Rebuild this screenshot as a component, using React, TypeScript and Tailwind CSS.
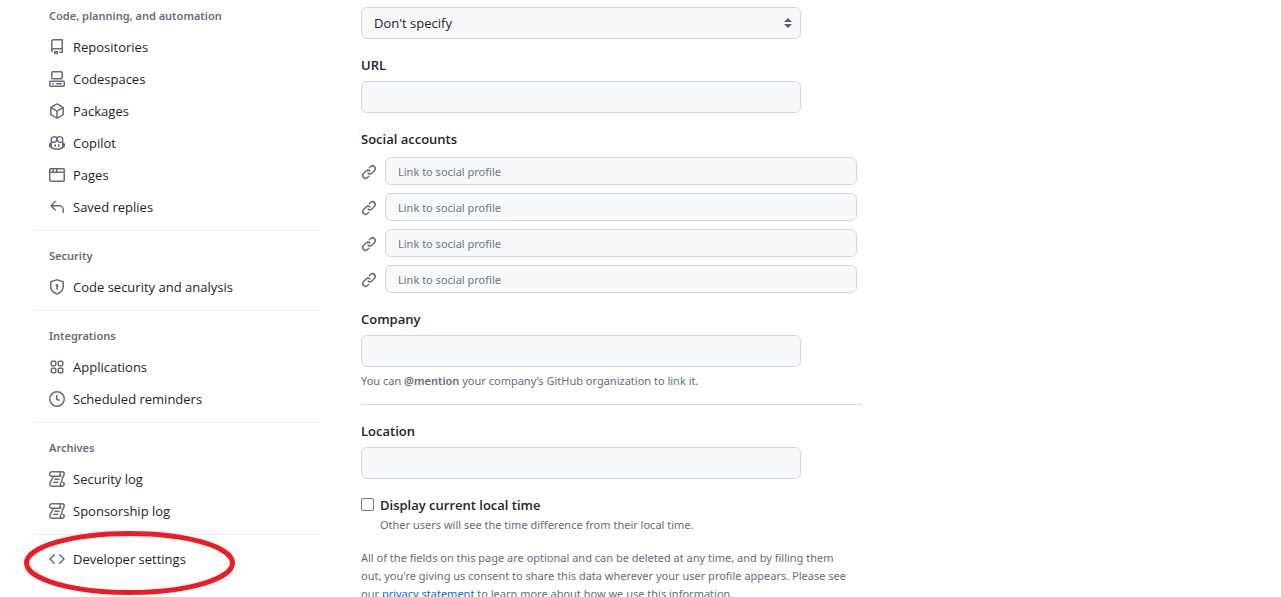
import { useId } from "react";

const ICONS = {
  repo: "M2 2.5A2.5 2.5 0 0 1 4.5 0h8.75a.75.75 0 0 1 .75.75v12.5a.75.75 0 0 1-.75.75h-2.5a.75.75 0 0 1 0-1.5h1.75v-2h-8a1 1 0 0 0-.714 1.7.75.75 0 1 1-1.072 1.05A2.495 2.495 0 0 1 2 11.5Zm10.5-1h-8a1 1 0 0 0-1 1v6.708A2.486 2.486 0 0 1 4.5 9h8ZM5 12.25a.25.25 0 0 1 .25-.25h3.5a.25.25 0 0 1 .25.25v3.25a.25.25 0 0 1-.4.2l-1.45-1.087a.249.249 0 0 0-.3 0L5.4 15.7a.25.25 0 0 1-.4-.2Z",
  codespaces:
    "M0 11.25c0-.966.784-1.75 1.75-1.75h12.5c.966 0 1.75.784 1.75 1.75v3A1.75 1.75 0 0 1 14.25 16H1.75A1.75 1.75 0 0 1 0 14.25Zm2-9.5C2 .784 2.784 0 3.75 0h8.5C13.216 0 14 .784 14 1.75v5a1.75 1.75 0 0 1-1.75 1.75h-8.5A1.75 1.75 0 0 1 2 6.75Zm1.75-.25a.25.25 0 0 0-.25.25v5c0 .138.112.25.25.25h8.5a.25.25 0 0 0 .25-.25v-5a.25.25 0 0 0-.25-.25Zm-2 9.5a.25.25 0 0 0-.25.25v3c0 .138.112.25.25.25h12.5a.25.25 0 0 0 .25-.25v-3a.25.25 0 0 0-.25-.25Z M7 12.75a.75.75 0 0 1 .75-.75h4.5a.75.75 0 0 1 0 1.5h-4.5a.75.75 0 0 1-.75-.75Zm-4 0a.75.75 0 0 1 .75-.75h.5a.75.75 0 0 1 0 1.5h-.5a.75.75 0 0 1-.75-.75Z",
  package:
    "m8.878.392 5.25 3.045c.54.314.872.89.872 1.514v6.098a1.75 1.75 0 0 1-.872 1.514l-5.25 3.045a1.75 1.75 0 0 1-1.756 0l-5.25-3.045A1.75 1.75 0 0 1 1 11.049V4.951c0-.624.332-1.201.872-1.514L7.122.392a1.75 1.75 0 0 1 1.756 0ZM7.875 1.69l-4.63 2.685L8 7.133l4.755-2.758-4.63-2.685a.248.248 0 0 0-.25 0ZM2.5 5.677v5.372c0 .09.047.171.125.216l4.625 2.683V8.432Zm6.25 8.271 4.625-2.683a.25.25 0 0 0 .125-.216V5.677L8.75 8.432Z",
  copilot:
    "M7.998 15.035c-4.562 0-7.873-2.914-7.998-3.749V9.338c.085-.628.677-1.686 1.588-2.065.013-.07.024-.143.036-.218.029-.183.06-.384.126-.612-.201-.508-.254-1.084-.254-1.656 0-.87.128-1.769.693-2.484.579-.733 1.494-1.124 2.724-1.261 1.206-.134 2.262.034 2.944.765.05.053.096.108.139.165.044-.057.094-.112.143-.165.682-.731 1.738-.899 2.944-.765 1.23.137 2.145.528 2.724 1.261.566.715.693 1.614.693 2.484 0 .572-.053 1.148-.254 1.656.066.228.098.429.126.612.012.076.024.148.037.218.924.385 1.522 1.471 1.591 2.095v1.872c0 .766-3.351 3.795-8.002 3.795Zm0-1.485c2.28 0 4.584-1.11 5.002-1.433V7.862l-.023-.116c-.49.21-1.075.291-1.727.291-1.146 0-2.059-.327-2.71-.991A3.222 3.222 0 0 1 8 6.303a3.24 3.24 0 0 1-.544.743c-.65.664-1.563.991-2.71.991-.652 0-1.236-.081-1.727-.291l-.023.116v4.255c.419.323 2.722 1.433 5.002 1.433ZM6.762 2.83c-.193-.206-.637-.413-1.682-.297-1.019.113-1.479.404-1.713.7-.247.312-.369.789-.369 1.554 0 .793.129 1.171.308 1.371.162.181.519.379 1.442.379.853 0 1.339-.235 1.638-.54.315-.322.527-.827.617-1.553.117-.935-.037-1.395-.241-1.614Zm4.155-.297c-1.044-.116-1.488.091-1.681.297-.204.219-.359.679-.242 1.614.091.726.303 1.231.618 1.553.299.305.784.54 1.638.54.922 0 1.28-.198 1.442-.379.179-.2.308-.578.308-1.371 0-.765-.123-1.242-.37-1.554-.233-.296-.693-.587-1.713-.7Z M6.25 9.037a.75.75 0 0 1 .75.75v1.501a.75.75 0 0 1-1.5 0V9.787a.75.75 0 0 1 .75-.75Zm4.25.75v1.501a.75.75 0 0 1-1.5 0V9.787a.75.75 0 0 1 1.5 0Z",
  browser:
    "M0 2.75C0 1.784.784 1 1.75 1h12.5c.966 0 1.75.784 1.75 1.75v10.5A1.75 1.75 0 0 1 14.25 15H1.75A1.75 1.75 0 0 1 0 13.25ZM14.5 6h-13v7.25c0 .138.112.25.25.25h12.5a.25.25 0 0 0 .25-.25Zm-6-3.5v2h6V2.75a.25.25 0 0 0-.25-.25ZM5 2.5v2h2v-2Zm-3.25 0a.25.25 0 0 0-.25.25V4.5h2v-2Z",
  reply:
    "M6.78 1.97a.75.75 0 0 1 0 1.06L3.81 6h6.44A4.75 4.75 0 0 1 15 10.75v2.5a.75.75 0 0 1-1.5 0v-2.5a3.25 3.25 0 0 0-3.25-3.25H3.81l2.97 2.97a.749.749 0 0 1-.326 1.275.749.749 0 0 1-.734-.215L1.47 7.28a.75.75 0 0 1 0-1.06l4.25-4.25a.75.75 0 0 1 1.06 0Z",
  shieldLock:
    "m8.533.133 5.25 1.68A1.75 1.75 0 0 1 15 3.48V7c0 1.566-.32 3.182-1.303 4.682-.983 1.498-2.585 2.813-5.032 3.855a1.697 1.697 0 0 1-1.33 0c-2.447-1.042-4.049-2.357-5.032-3.855C1.32 10.182 1 8.566 1 7V3.48a1.755 1.755 0 0 1 1.217-1.667l5.25-1.68a1.748 1.748 0 0 1 1.066 0Zm-.61 1.429.001.001-5.25 1.68a.251.251 0 0 0-.174.237V7c0 1.36.275 2.666 1.057 3.859.784 1.194 2.121 2.342 4.366 3.298a.196.196 0 0 0 .154 0c2.245-.957 3.582-2.103 4.366-3.297C13.225 9.666 13.5 8.358 13.5 7V3.48a.25.25 0 0 0-.174-.238l-5.25-1.68a.25.25 0 0 0-.153 0ZM9.5 6.5c0 .536-.286 1.032-.75 1.3v2.45a.75.75 0 0 1-1.5 0V7.8A1.5 1.5 0 1 1 9.5 6.5Z",
  apps: "M1.5 3.25c0-.966.784-1.75 1.75-1.75h2.5c.966 0 1.75.784 1.75 1.75v2.5A1.75 1.75 0 0 1 5.75 7.5h-2.5A1.75 1.75 0 0 1 1.5 5.75Zm7 0c0-.966.784-1.75 1.75-1.75h2.5c.966 0 1.75.784 1.75 1.75v2.5a1.75 1.75 0 0 1-1.75 1.75h-2.5A1.75 1.75 0 0 1 8.5 5.75Zm-7 7c0-.966.784-1.75 1.75-1.75h2.5c.966 0 1.75.784 1.75 1.75v2.5a1.75 1.75 0 0 1-1.75 1.75h-2.5a1.75 1.75 0 0 1-1.75-1.75Zm7 0c0-.966.784-1.75 1.75-1.75h2.5c.966 0 1.75.784 1.75 1.75v2.5a1.75 1.75 0 0 1-1.75 1.75h-2.5a1.75 1.75 0 0 1-1.75-1.75ZM3.25 3a.25.25 0 0 0-.25.25v2.5c0 .138.112.25.25.25h2.5A.25.25 0 0 0 6 5.75v-2.5A.25.25 0 0 0 5.75 3Zm7 0a.25.25 0 0 0-.25.25v2.5c0 .138.112.25.25.25h2.5a.25.25 0 0 0 .25-.25v-2.5a.25.25 0 0 0-.25-.25Zm-7 7a.25.25 0 0 0-.25.25v2.5c0 .138.112.25.25.25h2.5a.25.25 0 0 0 .25-.25v-2.5a.25.25 0 0 0-.25-.25Zm7 0a.25.25 0 0 0-.25.25v2.5c0 .138.112.25.25.25h2.5a.25.25 0 0 0 .25-.25v-2.5a.25.25 0 0 0-.25-.25Z",
  clock:
    "M8 0a8 8 0 1 1 0 16A8 8 0 0 1 8 0ZM1.5 8a6.5 6.5 0 1 0 13 0 6.5 6.5 0 0 0-13 0Zm7-3.25v2.992l2.028.812a.75.75 0 0 1-.557 1.392l-2.5-1A.751.751 0 0 1 7 8.25v-3.5a.75.75 0 0 1 1.5 0Z",
  code: "m11.28 3.22 4.25 4.25a.75.75 0 0 1 0 1.06l-4.25 4.25a.749.749 0 0 1-1.275-.326.749.749 0 0 1 .215-.734L13.94 8l-3.72-3.72a.749.749 0 0 1 .326-1.275.749.749 0 0 1 .734.215Zm-6.56 0a.751.751 0 0 1 1.042.018.751.751 0 0 1 .018 1.042L2.06 8l3.72 3.72a.749.749 0 0 1-.326 1.275.749.749 0 0 1-.734-.215L.47 8.53a.75.75 0 0 1 0-1.06Z",
  link: "m7.775 3.275 1.25-1.25a3.5 3.5 0 1 1 4.95 4.95l-2.5 2.5a3.5 3.5 0 0 1-4.95 0 .751.751 0 0 1 .018-1.042.751.751 0 0 1 1.042-.018 1.998 1.998 0 0 0 2.83 0l2.5-2.5a2.002 2.002 0 0 0-2.83-2.83l-1.25 1.25a.751.751 0 0 1-1.042-.018.751.751 0 0 1-.018-1.042Zm-4.69 9.64a1.998 1.998 0 0 0 2.83 0l1.25-1.25a.751.751 0 0 1 1.042.018.751.751 0 0 1 .018 1.042l-1.25 1.25a3.5 3.5 0 1 1-4.95-4.95l2.5-2.5a3.5 3.5 0 0 1 4.95 0 .751.751 0 0 1-.018 1.042.751.751 0 0 1-1.042.018 1.998 1.998 0 0 0-2.83 0l-2.5 2.5a1.998 1.998 0 0 0 0 2.83Z",
};

type IconName = keyof typeof ICONS | "log";

function Icon({ name }: { name: IconName }) {
  if (name === "log") {
    return (
      <svg
        viewBox="0 0 16 16"
        className="size-4 shrink-0 fill-none stroke-[#656d76] stroke-[1.5]"
        strokeLinecap="round"
        strokeLinejoin="round"
        aria-hidden="true"
      >
        <path d="M2.75.75h10.5a2 2 0 0 1 1.9 2.4c-.3 1.8-1.5 3.4-2 5-.4 1.1-.5 1.8-.5 2.6M11.6 5.25H2.75a2 2 0 0 1-2-2V2.75a2 2 0 0 1 2-2M12 .75c-1.3 1.1-1.4 3.2-.2 4.4M4.2 5.3C4 7.500 1.6 9.500.9 12.400a2.200 2.200 0 0 0 2 2.850h10.350a2 2 0 0 0 1-3.700M12.700 10.700c-1.300 1.200-1.600 3.200-.500 4.500M6 8.250h4M4.750 11.250h4" />
      </svg>
    );
  }
  return (
    <svg viewBox="0 0 16 16" className="size-4 shrink-0 fill-[#656d76]" aria-hidden="true">
      <path d={ICONS[name]} />
    </svg>
  );
}

const SECTIONS: { title: string; items: { icon: IconName; label: string }[] }[] = [
  {
    title: "Code, planning, and automation",
    items: [
      { icon: "repo", label: "Repositories" },
      { icon: "codespaces", label: "Codespaces" },
      { icon: "package", label: "Packages" },
      { icon: "copilot", label: "Copilot" },
      { icon: "browser", label: "Pages" },
      { icon: "reply", label: "Saved replies" },
    ],
  },
  { title: "Security", items: [{ icon: "shieldLock", label: "Code security and analysis" }] },
  {
    title: "Integrations",
    items: [
      { icon: "apps", label: "Applications" },
      { icon: "clock", label: "Scheduled reminders" },
    ],
  },
  {
    title: "Archives",
    items: [
      { icon: "log", label: "Security log" },
      { icon: "log", label: "Sponsorship log" },
    ],
  },
];

const SMALL = "font-['Noto_Sans','Open_Sans',sans-serif] text-[11px] leading-[18px]";

function NavItem({ icon, label }: { icon: IconName; label: string }) {
  return (
    <a href="#" className="flex h-8 items-center gap-2 px-4 text-[13px] leading-5">
      <Icon name={icon} />
      {label}
    </a>
  );
}

function Sidebar() {
  return (
    <nav aria-label="Settings" className="w-72 shrink-0">
      {SECTIONS.map((section) => (
        <section key={section.title} className="mb-2 border-b border-[#e8eaed] pb-[7px]">
          <h3 className={`${SMALL} px-4 pt-2 pb-1.5 font-semibold text-[#656d76]`}>{section.title}</h3>
          <ul>
            {section.items.map((item) => (
              <li key={item.label}>
                <NavItem {...item} />
              </li>
            ))}
          </ul>
        </section>
      ))}
      <div className="relative">
        <NavItem icon="code" label="Developer settings" />
        <svg
          viewBox="0 0 211 64"
          className="pointer-events-none absolute -top-3 -left-[9px] h-16 w-[211px]"
          aria-hidden="true"
        >
          <ellipse cx="105.5" cy="32" rx="103" ry="29.5" fill="none" stroke="#ed1c24" strokeWidth="5" />
        </svg>
      </div>
    </nav>
  );
}

const FIELD = "w-full rounded-md border border-[#d0d7de] bg-[#f6f8fa] px-3";

function TextField({ label }: { label: string }) {
  const id = useId();
  return (
    <div>
      <label htmlFor={id} className="block pb-1.5 leading-5 font-semibold">
        {label}
      </label>
      <input id={id} type="text" className={`${FIELD} block h-8 max-w-[440px]`} />
    </div>
  );
}

function ProfileForm() {
  return (
    <form className="max-w-[501px] min-w-0 flex-1 pt-2">
      <div className="relative max-w-[440px]">
        <select aria-label="Pronouns" className={`${FIELD} block h-8 appearance-none leading-5`}>
          <option>Don't specify</option>
        </select>
        <svg viewBox="0 0 8 10" className="pointer-events-none absolute top-[11px] right-[9px] h-2.5 w-2" aria-hidden="true">
          <path d="M4 0 8 4H0ZM0 6h8L4 10Z" fill="#57606a" />
        </svg>
      </div>

      <div className="mt-4">
        <TextField label="URL" />
      </div>

      <fieldset className="mt-4">
        <legend className="pb-2 leading-5 font-semibold">Social accounts</legend>
        <div className="flex flex-col gap-2 pr-[5px]">
          {[1, 2, 3, 4].map((n) => (
            <div key={n} className="flex items-center gap-2">
              <span className="pt-0.5">
                <Icon name="link" />
              </span>
              <input
                type="text"
                aria-label={`Link to social profile ${n}`}
                placeholder="Link to social profile"
                className={`${FIELD} ${SMALL} h-7 placeholder:text-[#6e7781]`}
              />
            </div>
          ))}
        </div>
      </fieldset>

      <div className="mt-4">
        <TextField label="Company" />
        <p className={`${SMALL} mt-[5px] text-[#656d76]`}>
          You can <strong className="font-semibold">@mention</strong> your company’s GitHub organization to link it.
        </p>
      </div>

      <hr className="mt-3.5 mb-4 border-[#d8dee4]" />

      <TextField label="Location" />

      <div className="mt-4 flex gap-1.5">
        <input
          id="show-time"
          type="checkbox"
          className="mt-[3px] size-[13px] shrink-0 appearance-none rounded-[2px] border border-[#767676] bg-white checked:bg-[#0969da]"
        />
        <div>
          <label htmlFor="show-time" className="block leading-5 font-semibold">
            Display current local time
          </label>
          <p className={`${SMALL} pt-px text-[#656d76]`}>
            Other users will see the time difference from their local time.
          </p>
        </div>
      </div>

      <p className={`${SMALL} mt-[15px] pr-2 text-[#656d76]`}>
        All of the fields on this page are optional and can be deleted at any time, and by filling them out, you're
        giving us consent to share this data wherever your user profile appears. Please see our{" "}
        <a href="#" className="text-[#0969da]">
          privacy statement
        </a>{" "}
        to learn more about how we use this information.
      </p>
    </form>
  );
}

export default function App() {
  return (
    <div className="h-screen overflow-hidden bg-white">
      <main className="-mt-px flex gap-10 px-[33px] font-['Open_Sans','Noto_Sans',sans-serif] text-[13px] text-[#1f2328]">
        <Sidebar />
        <ProfileForm />
      </main>
    </div>
  );
}
